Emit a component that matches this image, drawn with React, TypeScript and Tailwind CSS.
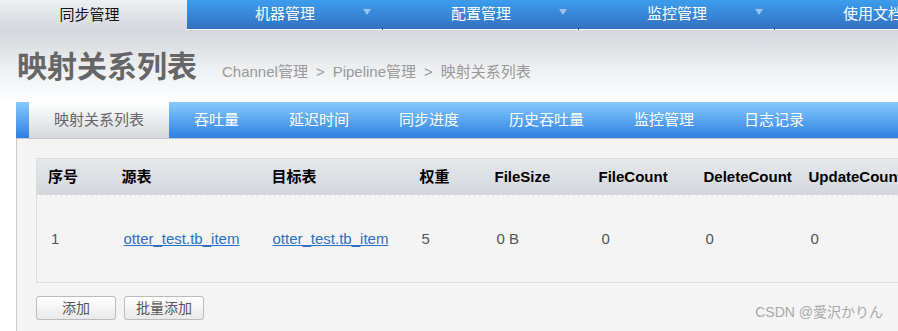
const navItems = ["同步管理", "机器管理", "配置管理", "监控管理", "使用文档"];
const tabs = ["映射关系列表", "吞吐量", "延迟时间", "同步进度", "历史吞吐量", "监控管理", "日志记录"];

const cols = [
  { label: "序号", w: "w-[74px]" },
  { label: "源表", w: "w-[150px]" },
  { label: "目标表", w: "w-[148px]" },
  { label: "权重", w: "w-[75px]" },
  { label: "FileSize", w: "w-[104px]" },
  { label: "FileCount", w: "w-[105px]" },
  { label: "DeleteCount", w: "w-[105px]" },
  { label: "UpdateCount", w: "w-[120px]" },
];

export default function App() {
  return (
    <div className="relative w-[898px] h-[331px] overflow-hidden bg-white font-['Liberation_Sans','Noto_Sans_CJK_SC',sans-serif]">
      {/* top nav */}
      <div className="flex h-[30px] bg-gradient-to-b from-[#3d9ded] to-[#336fbf]">
        {navItems.map((n, i) =>
          i === 0 ? (
            <div
              key={n}
              className="w-[187px] shrink-0 h-[30px] flex items-center justify-center pr-[8px] text-[15px] text-[#111] bg-gradient-to-b from-[#eef0f2] to-[#d4d7dc]"
            >
              {n}
            </div>
          ) : (
            <div
              key={n}
              className="relative w-[196px] shrink-0 h-[30px] flex items-center justify-center text-[15px] text-white border-b border-white"
            >
              {n}
              {i < 4 && (
                <span className="absolute right-[12px] top-[9px] w-0 h-0 border-l-[4px] border-r-[4px] border-t-[6px] border-l-transparent border-r-transparent border-t-[#9cc3ee]" />
              )}
              <span className="absolute right-0 bottom-[-1px] w-px h-[3px] bg-[#2a5a9a]" />
            </div>
          )
        )}
      </div>

      {/* title area */}
      <div className="h-[72px] bg-gradient-to-b from-[#d3d6db] via-[#eceef0] to-white flex items-baseline pt-[19px] pl-[17px]">
        <h1 className="text-[30px] leading-[36px] font-bold text-[#666]">映射关系列表</h1>
        <div className="ml-[25px] text-[15px] text-[#999] flex gap-[8px]">
          <span>Channel管理</span>
          <span>&gt;</span>
          <span>Pipeline管理</span>
          <span>&gt;</span>
          <span>映射关系列表</span>
        </div>
      </div>

      {/* tab bar */}
      <div className="ml-[16px] flex h-[37px] border-b border-[#c8c8c8] bg-gradient-to-b from-[#86cbfb] to-[#2e7fe3]">
        <div className="w-[13px] shrink-0" />
        {tabs.map((t, i) => (
          <div
            key={t}
            className={
              i === 0
                ? "shrink-0 px-[25px] w-[140px] flex items-center justify-center text-[15px] text-[#666] bg-gradient-to-b from-white to-[#d6d9de]"
                : "shrink-0 px-[25px] flex items-center text-[15px] text-white"
            }
          >
            {t}
          </div>
        ))}
      </div>

      {/* content panel */}
      <div className="ml-[16px] h-[200px] border-l border-[#ccc] bg-[#f4f4f4] pt-[19px] pl-[19px]">
        <table className="border-collapse table-fixed w-[881px] border border-[#dcdcdc]">
          <thead>
            <tr className="h-[37px] bg-gradient-to-b from-[#e6e8eb] to-[#d3d7dd] border-b border-dashed border-white">
              {cols.map((c) => (
                <th key={c.label} className={`${c.w} text-left pl-[11px] text-[15px] font-bold text-black whitespace-nowrap`}>
                  {c.label}
                </th>
              ))}
            </tr>
          </thead>
          <tbody>
            <tr className="h-[87px] text-[15px] text-[#555]">
              <td className="pl-[14px]">1</td>
              <td className="pl-[13px]">
                <a className="text-[#2f6fc4] underline">otter_test.tb_item</a>
              </td>
              <td className="pl-[12px]">
                <a className="text-[#2f6fc4] underline">otter_test.tb_item</a>
              </td>
              <td className="pl-[13px]">5</td>
              <td className="pl-[13px]">0 B</td>
              <td className="pl-[14px]">0</td>
              <td className="pl-[13px]">0</td>
              <td className="pl-[13px]">0</td>
            </tr>
          </tbody>
        </table>
        <div className="flex gap-[8px] mt-[13px]">
          <button className="w-[80px] h-[24px] rounded-[3px] border border-[#bbb] bg-gradient-to-b from-white to-[#e9e9e9] text-[14px] text-[#555]">
            添加
          </button>
          <button className="w-[80px] h-[24px] rounded-[3px] border border-[#bbb] bg-gradient-to-b from-white to-[#e9e9e9] text-[14px] text-[#555]">
            批量添加
          </button>
        </div>
      </div>

      {/* watermark */}
      <div className="absolute right-[15px] bottom-[8px] text-[14px] text-[#a8a8a8] font-['Liberation_Sans','Noto_Sans_CJK_JP',sans-serif]">
        CSDN @愛沢かりん
      </div>
    </div>
  );
}
